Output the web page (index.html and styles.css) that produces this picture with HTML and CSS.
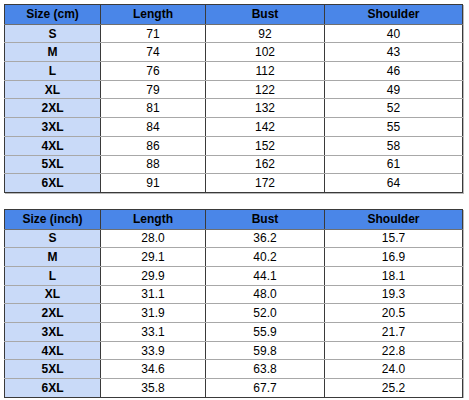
FILE: index.html
```html
<!DOCTYPE html>
<html>
<head>
<meta charset="utf-8">
<link rel="stylesheet" href="styles.css">
</head>
<body>
<table class="size-table">
  <colgroup><col class="c1"><col class="c2"><col class="c3"><col class="c4"></colgroup>
  <tr class="head"><th>Size (cm)</th><th>Length</th><th>Bust</th><th>Shoulder</th></tr>
  <tr><th>S</th><td>71</td><td>92</td><td>40</td></tr>
  <tr><th>M</th><td>74</td><td>102</td><td>43</td></tr>
  <tr><th>L</th><td>76</td><td>112</td><td>46</td></tr>
  <tr><th>XL</th><td>79</td><td>122</td><td>49</td></tr>
  <tr><th>2XL</th><td>81</td><td>132</td><td>52</td></tr>
  <tr><th>3XL</th><td>84</td><td>142</td><td>55</td></tr>
  <tr><th>4XL</th><td>86</td><td>152</td><td>58</td></tr>
  <tr><th>5XL</th><td>88</td><td>162</td><td>61</td></tr>
  <tr><th>6XL</th><td>91</td><td>172</td><td>64</td></tr>
</table>
<table class="size-table second">
  <colgroup><col class="c1"><col class="c2"><col class="c3"><col class="c4"></colgroup>
  <tr class="head"><th>Size (inch)</th><th>Length</th><th>Bust</th><th>Shoulder</th></tr>
  <tr><th>S</th><td>28.0</td><td>36.2</td><td>15.7</td></tr>
  <tr><th>M</th><td>29.1</td><td>40.2</td><td>16.9</td></tr>
  <tr><th>L</th><td>29.9</td><td>44.1</td><td>18.1</td></tr>
  <tr><th>XL</th><td>31.1</td><td>48.0</td><td>19.3</td></tr>
  <tr><th>2XL</th><td>31.9</td><td>52.0</td><td>20.5</td></tr>
  <tr><th>3XL</th><td>33.1</td><td>55.9</td><td>21.7</td></tr>
  <tr><th>4XL</th><td>33.9</td><td>59.8</td><td>22.8</td></tr>
  <tr><th>5XL</th><td>34.6</td><td>63.8</td><td>24.0</td></tr>
  <tr><th>6XL</th><td>35.8</td><td>67.7</td><td>25.2</td></tr>
</table>
</body>
</html>
```
FILE: styles.css
```css
html, body {
  margin: 0;
  padding: 0;
  background: #ffffff;
}
body {
  padding: 4px 0 0 4px;
  font-family: "Liberation Sans", Arial, sans-serif;
  font-size: 12px;
  color: #000;
}
.size-table {
  border-collapse: collapse;
  table-layout: fixed;
  width: 458px;
  box-shadow: 1px 1px 0 #b8b8b8;
}
.size-table.second {
  margin-top: 16px;
}
.c1 { width: 96px; }
.c2 { width: 105px; }
.c3 { width: 119px; }
.c4 { width: 138px; }
.size-table th,
.size-table td {
  height: 17.7px;
  padding: 0;
  text-align: center;
  vertical-align: middle;
  border-left: 1px solid #3a3a3a;
  border-right: 1px solid #3a3a3a;
  border-top: 1px solid #a8a8a8;
  border-bottom: 1px solid #a8a8a8;
  line-height: 14px;
}
.size-table th {
  font-weight: bold;
  background: #c9daf8;
}
.size-table td {
  font-weight: normal;
  background: #ffffff;
}
.size-table tr.head th {
  background: #4a86e8;
  border-top: 1px solid #3a3a3a;
  border-bottom: 1px solid #6f6f6f;
  height: 18.7px;
}
.size-table tr:last-child th,
.size-table tr:last-child td {
  border-bottom: 1px solid #3a3a3a;
}
```
